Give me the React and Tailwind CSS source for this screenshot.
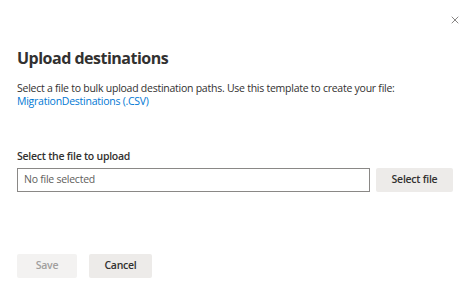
import { X } from 'lucide-react';

function UploadDestinationsDialog() {
  return (
    <div
      className="relative h-[306px] w-[476px] bg-white text-[#323130]"
      style={{ fontFamily: '"Open Sans", "Noto Sans", sans-serif' }}
    >
      <button
        type="button"
        className="absolute right-[15px] top-[14px] p-0 text-[#605e5c]"
        title="Close"
      >
        <X size={12} strokeWidth={1.5} />
      </button>

      <div className="flex flex-col px-[17px] pt-[46px]">
        <h2 className="text-[16px] font-bold leading-[24px] tracking-[-0.5px]">Upload destinations</h2>

        <p className="mt-[12px] text-[10.5px] leading-[13px] tracking-[-0.25px]">
          Select a file to bulk upload destination paths. Use this template to create your file:
          <br />
          <a className="text-[#0078d4]">MigrationDestinations (.CSV)</a>
        </p>

        <label className="mt-[41px] text-[10.5px] font-semibold leading-[14px] tracking-[-0.25px]">
          Select the file to upload
        </label>

        <div className="mt-[5px] flex items-center gap-[6px]">
          <div className="flex h-[24px] w-[353px] items-center border border-[#8a8886] px-[6px] text-[10.5px] text-[#605e5c] tracking-[-0.25px]">
            No file selected
          </div>
          <button
            type="button"
            className="h-[24px] w-[77px] rounded-[2px] bg-[#edebe9] text-[10.5px] font-semibold text-[#323130] tracking-[-0.25px]"
          >
            Select file
          </button>
        </div>

        <div className="mt-[62px] flex gap-[12px]">
          <button
            type="button"
            className="h-[24px] w-[60px] rounded-[2px] bg-[#f3f2f1] text-[10.5px] font-semibold text-[#a19f9d] tracking-[-0.25px]"
          >
            Save
          </button>
          <button
            type="button"
            className="h-[24px] w-[63px] rounded-[2px] bg-[#edebe9] text-[10.5px] font-semibold text-[#323130] tracking-[-0.25px]"
          >
            Cancel
          </button>
        </div>
      </div>
    </div>
  );
}

export default function App() {
  return <UploadDestinationsDialog />;
}
